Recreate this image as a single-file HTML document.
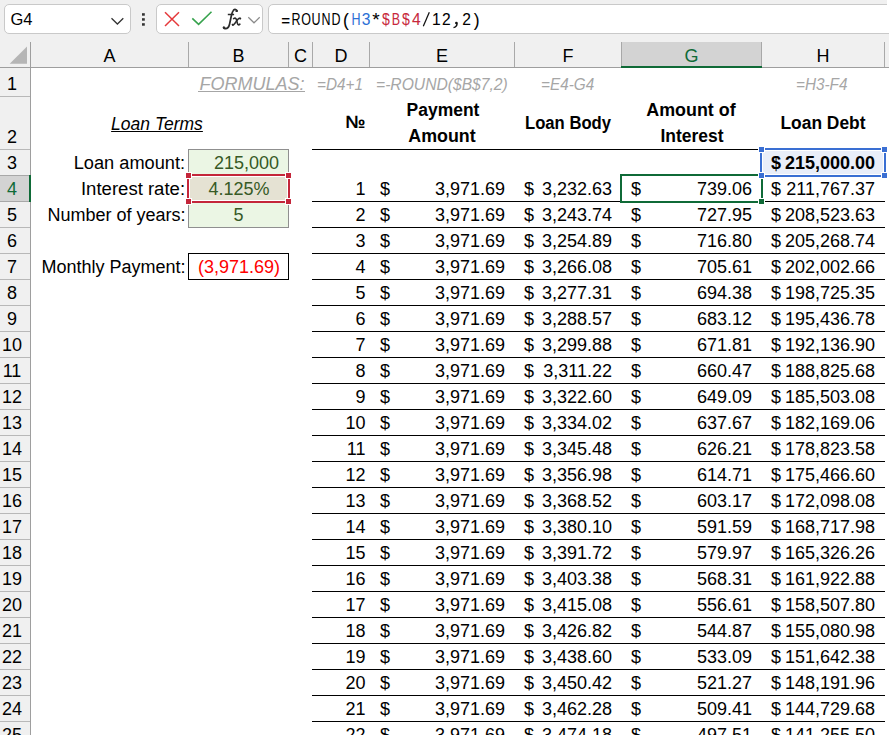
<!DOCTYPE html>
<html><head><meta charset="utf-8"><style>
html,body{margin:0;padding:0;}
body{width:889px;height:735px;overflow:hidden;position:relative;background:#fff;font-family:"Liberation Sans",sans-serif;}
.t{position:absolute;white-space:nowrap;line-height:normal;}
.r{position:absolute;box-sizing:border-box;}
div.r{box-sizing:content-box;}
</style></head><body>
<div class="r" style="left:0px;top:0px;width:889px;height:42px;background:#f0f0f0;"></div>
<div class="r" style="left:4px;top:4px;width:125px;height:28px;border:1px solid #c9c9c9;border-radius:5px;background:#fff"></div>
<div class="r" style="left:156px;top:4px;width:105px;height:28px;border:1px solid #c9c9c9;border-radius:5px;background:#fff"></div>
<div class="r" style="left:268px;top:4px;width:630px;height:28px;border:1px solid #c9c9c9;border-radius:5px;background:#fff"></div>
<div class="r" style="left:887px;top:0px;width:2px;height:33px;background:#ffffff;"></div>
<div class="t" style="left:10.50px;top:10.07px;font-size:16.5px;color:#000;font-weight:normal;font-style:normal;font-family:'Liberation Sans', sans-serif;">G4</div>
<svg class="r" style="left:0;top:0" width="889" height="42" viewBox="0 0 889 42">
<polyline points="111.5,18.2 117.4,24 123.3,18.2" fill="none" stroke="#333" stroke-width="1.3"/>
<rect x="142" y="13.2" width="2.8" height="2.5" fill="#333"/>
<rect x="142" y="18.2" width="2.8" height="2.5" fill="#333"/>
<rect x="142" y="23.2" width="2.8" height="2.5" fill="#333"/>
<line x1="165" y1="12.2" x2="179" y2="26" stroke="#e5393b" stroke-width="1.5"/>
<line x1="179" y1="12.2" x2="165" y2="26" stroke="#e5393b" stroke-width="1.5"/>
<polyline points="192.3,18.4 198.6,24.3 211.5,11.8" fill="none" stroke="#37a24d" stroke-width="1.6"/>
<polyline points="248.3,17.3 254,22.8 259.7,17.3" fill="none" stroke="#8a8a8a" stroke-width="1.2"/>
</svg>
<svg class="r" style="left:0;top:0" width="260" height="42" viewBox="0 0 260 42">
<path d="M237,11 C236.6,9.4 234.8,8.9 233.5,10.2 C232.4,11.4 231.8,13.5 231.3,16 L229.6,24 C229,26.8 227.4,28.9 225,28.7 C224,28.6 223.4,28 223.6,27.3" fill="none" stroke="#2b2b2b" stroke-width="1.7" stroke-linecap="round"/>
<circle cx="236.6" cy="10.9" r="1.2" fill="#2b2b2b"/>
<circle cx="224.1" cy="27.6" r="1.2" fill="#2b2b2b"/>
<path d="M227.8,14.5 L234.1,14.5" stroke="#2b2b2b" stroke-width="1.5"/>
<path d="M233.6,18.6 C235.2,17.6 236,18.2 236.4,19.6 L237.5,23.6 C237.9,25 238.7,25.3 239.9,24.2" fill="none" stroke="#2b2b2b" stroke-width="1.6" stroke-linecap="round"/>
<path d="M240.5,18.5 C239.6,17.8 238.9,18.1 237.9,19.2 L234.6,23.7 C233.8,24.9 233,25.2 232.4,24.6" fill="none" stroke="#2b2b2b" stroke-width="1.5" stroke-linecap="round"/>
<circle cx="240.1" cy="18.4" r="1.0" fill="#2b2b2b"/>
<circle cx="232.9" cy="24.8" r="1.0" fill="#2b2b2b"/>
</svg>
<div class="t" style="left:-14.38px;width:600px;text-align:center;top:11.64px;font-size:15.2px;color:#000;font-weight:normal;font-style:normal;font-family:'Liberation Sans', sans-serif;width:40px;left:265.62px;transform:scaleX(1.00);-webkit-text-stroke:0.05px #000;">=</div>
<div class="t" style="left:-4.32px;width:600px;text-align:center;top:11.28px;font-size:15.6px;color:#000;font-weight:normal;font-style:normal;font-family:'Liberation Sans', sans-serif;width:40px;left:275.68px;transform:scaleX(0.80);-webkit-text-stroke:0.05px #000;">R</div>
<div class="t" style="left:5.73px;width:600px;text-align:center;top:11.28px;font-size:15.6px;color:#000;font-weight:normal;font-style:normal;font-family:'Liberation Sans', sans-serif;width:40px;left:285.73px;transform:scaleX(0.80);-webkit-text-stroke:0.05px #000;">O</div>
<div class="t" style="left:15.77px;width:600px;text-align:center;top:11.28px;font-size:15.6px;color:#000;font-weight:normal;font-style:normal;font-family:'Liberation Sans', sans-serif;width:40px;left:295.77px;transform:scaleX(0.80);-webkit-text-stroke:0.05px #000;">U</div>
<div class="t" style="left:25.82px;width:600px;text-align:center;top:11.28px;font-size:15.6px;color:#000;font-weight:normal;font-style:normal;font-family:'Liberation Sans', sans-serif;width:40px;left:305.82px;transform:scaleX(0.80);-webkit-text-stroke:0.05px #000;">N</div>
<div class="t" style="left:35.88px;width:600px;text-align:center;top:11.28px;font-size:15.6px;color:#000;font-weight:normal;font-style:normal;font-family:'Liberation Sans', sans-serif;width:40px;left:315.88px;transform:scaleX(0.80);-webkit-text-stroke:0.05px #000;">D</div>
<div class="t" style="left:45.93px;width:600px;text-align:center;top:10.36px;font-size:17.5px;color:#000;font-weight:normal;font-style:normal;font-family:'Liberation Sans', sans-serif;width:40px;left:325.93px;transform:scaleX(1.00);-webkit-text-stroke:0.05px #000;">(</div>
<div class="t" style="left:55.98px;width:600px;text-align:center;top:11.28px;font-size:15.6px;color:#2b6fd6;font-weight:normal;font-style:normal;font-family:'Liberation Sans', sans-serif;width:40px;left:335.98px;transform:scaleX(0.80);-webkit-text-stroke:0.05px #2b6fd6;">H</div>
<div class="t" style="left:66.02px;width:600px;text-align:center;top:11.28px;font-size:15.6px;color:#2b6fd6;font-weight:normal;font-style:normal;font-family:'Liberation Sans', sans-serif;width:40px;left:346.02px;transform:scaleX(1.00);-webkit-text-stroke:0.05px #2b6fd6;">3</div>
<div class="t" style="left:76.07px;width:600px;text-align:center;top:9.20px;font-size:19px;color:#000;font-weight:normal;font-style:normal;font-family:'Liberation Sans', sans-serif;width:40px;left:356.07px;transform:scaleX(1.00);-webkit-text-stroke:0.05px #000;">*</div>
<div class="t" style="left:86.12px;width:600px;text-align:center;top:10.47px;font-size:16.5px;color:#c8283c;font-weight:normal;font-style:normal;font-family:'Liberation Sans', sans-serif;width:40px;left:366.12px;transform:scaleX(0.85);-webkit-text-stroke:0.05px #c8283c;">$</div>
<div class="t" style="left:96.18px;width:600px;text-align:center;top:11.28px;font-size:15.6px;color:#c8283c;font-weight:normal;font-style:normal;font-family:'Liberation Sans', sans-serif;width:40px;left:376.18px;transform:scaleX(0.80);-webkit-text-stroke:0.05px #c8283c;">B</div>
<div class="t" style="left:106.23px;width:600px;text-align:center;top:10.47px;font-size:16.5px;color:#c8283c;font-weight:normal;font-style:normal;font-family:'Liberation Sans', sans-serif;width:40px;left:386.23px;transform:scaleX(0.85);-webkit-text-stroke:0.05px #c8283c;">$</div>
<div class="t" style="left:116.27px;width:600px;text-align:center;top:11.28px;font-size:15.6px;color:#c8283c;font-weight:normal;font-style:normal;font-family:'Liberation Sans', sans-serif;width:40px;left:396.27px;transform:scaleX(1.00);-webkit-text-stroke:0.05px #c8283c;">4</div>
<div class="t" style="left:136.38px;width:600px;text-align:center;top:11.28px;font-size:15.6px;color:#000;font-weight:normal;font-style:normal;font-family:'Liberation Sans', sans-serif;width:40px;left:416.38px;transform:scaleX(1.00);-webkit-text-stroke:0.05px #000;">1</div>
<div class="t" style="left:146.43px;width:600px;text-align:center;top:11.28px;font-size:15.6px;color:#000;font-weight:normal;font-style:normal;font-family:'Liberation Sans', sans-serif;width:40px;left:426.43px;transform:scaleX(1.00);-webkit-text-stroke:0.05px #000;">2</div>
<div class="t" style="left:166.52px;width:600px;text-align:center;top:11.28px;font-size:15.6px;color:#000;font-weight:normal;font-style:normal;font-family:'Liberation Sans', sans-serif;width:40px;left:446.52px;transform:scaleX(1.00);-webkit-text-stroke:0.05px #000;">2</div>
<div class="t" style="left:176.58px;width:600px;text-align:center;top:10.36px;font-size:17.5px;color:#000;font-weight:normal;font-style:normal;font-family:'Liberation Sans', sans-serif;width:40px;left:456.58px;transform:scaleX(1.00);-webkit-text-stroke:0.05px #000;">)</div>
<svg class="r" style="left:0;top:0" width="889" height="42" viewBox="0 0 889 42"><line x1="423.3" y1="26.2" x2="429.3" y2="12.3" stroke="#111" stroke-width="1.25"/><circle cx="456.3" cy="23.1" r="1.25" fill="#111"/><path d="M456.9,22.6 C457.3,25 456.4,26.9 453.5,27.7" fill="none" stroke="#111" stroke-width="1.4"/></svg>
<div class="r" style="left:0px;top:42px;width:889px;height:25px;background:#f0f0f0;"></div>
<div class="r" style="left:0px;top:67px;width:889px;height:1px;background:#9e9e9e;"></div>
<div class="r" style="left:0px;top:68px;width:30px;height:667px;background:#f0f0f0;"></div>
<div class="r" style="left:30px;top:42px;width:1px;height:693px;background:#9e9e9e;"></div>
<svg class="r" style="left:0;top:42px" width="30" height="25" viewBox="0 42 30 25"><polygon points="27,46.5 27,63.7 9.7,63.7" fill="#b5b5b5"/></svg>
<div class="r" style="left:188px;top:42px;width:1px;height:25px;background:#a9a9a9;"></div>
<div class="r" style="left:288px;top:42px;width:1px;height:25px;background:#a9a9a9;"></div>
<div class="r" style="left:312px;top:42px;width:1px;height:25px;background:#a9a9a9;"></div>
<div class="r" style="left:369px;top:42px;width:1px;height:25px;background:#a9a9a9;"></div>
<div class="r" style="left:514px;top:42px;width:1px;height:25px;background:#a9a9a9;"></div>
<div class="r" style="left:621px;top:42px;width:1px;height:25px;background:#a9a9a9;"></div>
<div class="r" style="left:761px;top:42px;width:1px;height:25px;background:#a9a9a9;"></div>
<div class="r" style="left:884px;top:42px;width:1px;height:25px;background:#a9a9a9;"></div>
<div class="r" style="left:622px;top:42px;width:139px;height:24px;background:#d3d3d3;"></div>
<div class="r" style="left:621px;top:42px;width:1px;height:25px;background:#a8a8a8;"></div>
<div class="r" style="left:761px;top:42px;width:1px;height:25px;background:#a8a8a8;"></div>
<div class="r" style="left:621px;top:66px;width:141px;height:2px;background:#0f6a37;"></div>
<div class="t" style="left:-190.50px;width:600px;text-align:center;top:45.71px;font-size:18px;color:#000;font-weight:normal;font-style:normal;font-family:'Liberation Sans', sans-serif;">A</div>
<div class="t" style="left:-61.50px;width:600px;text-align:center;top:45.71px;font-size:18px;color:#000;font-weight:normal;font-style:normal;font-family:'Liberation Sans', sans-serif;">B</div>
<div class="t" style="left:0.50px;width:600px;text-align:center;top:45.71px;font-size:18px;color:#000;font-weight:normal;font-style:normal;font-family:'Liberation Sans', sans-serif;">C</div>
<div class="t" style="left:41.00px;width:600px;text-align:center;top:45.71px;font-size:18px;color:#000;font-weight:normal;font-style:normal;font-family:'Liberation Sans', sans-serif;">D</div>
<div class="t" style="left:142.00px;width:600px;text-align:center;top:45.71px;font-size:18px;color:#000;font-weight:normal;font-style:normal;font-family:'Liberation Sans', sans-serif;">E</div>
<div class="t" style="left:268.00px;width:600px;text-align:center;top:45.71px;font-size:18px;color:#000;font-weight:normal;font-style:normal;font-family:'Liberation Sans', sans-serif;">F</div>
<div class="t" style="left:391.50px;width:600px;text-align:center;top:45.71px;font-size:18px;color:#0f6a37;font-weight:normal;font-style:normal;font-family:'Liberation Sans', sans-serif;">G</div>
<div class="t" style="left:523.00px;width:600px;text-align:center;top:45.71px;font-size:18px;color:#000;font-weight:normal;font-style:normal;font-family:'Liberation Sans', sans-serif;">H</div>
<div class="r" style="left:0px;top:96px;width:30px;height:1px;background:#b8b8b8;"></div>
<div class="r" style="left:0px;top:149px;width:30px;height:1px;background:#b8b8b8;"></div>
<div class="r" style="left:0px;top:175px;width:30px;height:1px;background:#b8b8b8;"></div>
<div class="r" style="left:0px;top:201px;width:30px;height:1px;background:#b8b8b8;"></div>
<div class="r" style="left:0px;top:227px;width:30px;height:1px;background:#b8b8b8;"></div>
<div class="r" style="left:0px;top:253px;width:30px;height:1px;background:#b8b8b8;"></div>
<div class="r" style="left:0px;top:279px;width:30px;height:1px;background:#b8b8b8;"></div>
<div class="r" style="left:0px;top:305px;width:30px;height:1px;background:#b8b8b8;"></div>
<div class="r" style="left:0px;top:331px;width:30px;height:1px;background:#b8b8b8;"></div>
<div class="r" style="left:0px;top:357px;width:30px;height:1px;background:#b8b8b8;"></div>
<div class="r" style="left:0px;top:383px;width:30px;height:1px;background:#b8b8b8;"></div>
<div class="r" style="left:0px;top:409px;width:30px;height:1px;background:#b8b8b8;"></div>
<div class="r" style="left:0px;top:435px;width:30px;height:1px;background:#b8b8b8;"></div>
<div class="r" style="left:0px;top:461px;width:30px;height:1px;background:#b8b8b8;"></div>
<div class="r" style="left:0px;top:487px;width:30px;height:1px;background:#b8b8b8;"></div>
<div class="r" style="left:0px;top:513px;width:30px;height:1px;background:#b8b8b8;"></div>
<div class="r" style="left:0px;top:539px;width:30px;height:1px;background:#b8b8b8;"></div>
<div class="r" style="left:0px;top:565px;width:30px;height:1px;background:#b8b8b8;"></div>
<div class="r" style="left:0px;top:591px;width:30px;height:1px;background:#b8b8b8;"></div>
<div class="r" style="left:0px;top:617px;width:30px;height:1px;background:#b8b8b8;"></div>
<div class="r" style="left:0px;top:643px;width:30px;height:1px;background:#b8b8b8;"></div>
<div class="r" style="left:0px;top:669px;width:30px;height:1px;background:#b8b8b8;"></div>
<div class="r" style="left:0px;top:695px;width:30px;height:1px;background:#b8b8b8;"></div>
<div class="r" style="left:0px;top:721px;width:30px;height:1px;background:#b8b8b8;"></div>
<div class="r" style="left:0px;top:176px;width:29px;height:25px;background:#d3d3d3;"></div>
<div class="r" style="left:0px;top:175px;width:30px;height:1px;background:#a8a8a8;"></div>
<div class="r" style="left:0px;top:201px;width:30px;height:1px;background:#a8a8a8;"></div>
<div class="r" style="left:29px;top:175px;width:2px;height:27px;background:#0f6a37;"></div>
<div class="t" style="left:-288.00px;width:600px;text-align:center;top:73.71px;font-size:18px;color:#000;font-weight:normal;font-style:normal;font-family:'Liberation Sans', sans-serif;">1</div>
<div class="t" style="left:-288.00px;width:600px;text-align:center;top:126.71px;font-size:18px;color:#000;font-weight:normal;font-style:normal;font-family:'Liberation Sans', sans-serif;">2</div>
<div class="t" style="left:-288.00px;width:600px;text-align:center;top:152.71px;font-size:18px;color:#000;font-weight:normal;font-style:normal;font-family:'Liberation Sans', sans-serif;">3</div>
<div class="t" style="left:-288.00px;width:600px;text-align:center;top:178.71px;font-size:18px;color:#0f6a37;font-weight:normal;font-style:normal;font-family:'Liberation Sans', sans-serif;">4</div>
<div class="t" style="left:-288.00px;width:600px;text-align:center;top:204.71px;font-size:18px;color:#000;font-weight:normal;font-style:normal;font-family:'Liberation Sans', sans-serif;">5</div>
<div class="t" style="left:-288.00px;width:600px;text-align:center;top:230.71px;font-size:18px;color:#000;font-weight:normal;font-style:normal;font-family:'Liberation Sans', sans-serif;">6</div>
<div class="t" style="left:-288.00px;width:600px;text-align:center;top:256.71px;font-size:18px;color:#000;font-weight:normal;font-style:normal;font-family:'Liberation Sans', sans-serif;">7</div>
<div class="t" style="left:-288.00px;width:600px;text-align:center;top:282.71px;font-size:18px;color:#000;font-weight:normal;font-style:normal;font-family:'Liberation Sans', sans-serif;">8</div>
<div class="t" style="left:-288.00px;width:600px;text-align:center;top:308.71px;font-size:18px;color:#000;font-weight:normal;font-style:normal;font-family:'Liberation Sans', sans-serif;">9</div>
<div class="t" style="left:-288.00px;width:600px;text-align:center;top:334.71px;font-size:18px;color:#000;font-weight:normal;font-style:normal;font-family:'Liberation Sans', sans-serif;">10</div>
<div class="t" style="left:-288.00px;width:600px;text-align:center;top:360.71px;font-size:18px;color:#000;font-weight:normal;font-style:normal;font-family:'Liberation Sans', sans-serif;">11</div>
<div class="t" style="left:-288.00px;width:600px;text-align:center;top:386.71px;font-size:18px;color:#000;font-weight:normal;font-style:normal;font-family:'Liberation Sans', sans-serif;">12</div>
<div class="t" style="left:-288.00px;width:600px;text-align:center;top:412.71px;font-size:18px;color:#000;font-weight:normal;font-style:normal;font-family:'Liberation Sans', sans-serif;">13</div>
<div class="t" style="left:-288.00px;width:600px;text-align:center;top:438.71px;font-size:18px;color:#000;font-weight:normal;font-style:normal;font-family:'Liberation Sans', sans-serif;">14</div>
<div class="t" style="left:-288.00px;width:600px;text-align:center;top:464.71px;font-size:18px;color:#000;font-weight:normal;font-style:normal;font-family:'Liberation Sans', sans-serif;">15</div>
<div class="t" style="left:-288.00px;width:600px;text-align:center;top:490.71px;font-size:18px;color:#000;font-weight:normal;font-style:normal;font-family:'Liberation Sans', sans-serif;">16</div>
<div class="t" style="left:-288.00px;width:600px;text-align:center;top:516.71px;font-size:18px;color:#000;font-weight:normal;font-style:normal;font-family:'Liberation Sans', sans-serif;">17</div>
<div class="t" style="left:-288.00px;width:600px;text-align:center;top:542.71px;font-size:18px;color:#000;font-weight:normal;font-style:normal;font-family:'Liberation Sans', sans-serif;">18</div>
<div class="t" style="left:-288.00px;width:600px;text-align:center;top:568.71px;font-size:18px;color:#000;font-weight:normal;font-style:normal;font-family:'Liberation Sans', sans-serif;">19</div>
<div class="t" style="left:-288.00px;width:600px;text-align:center;top:594.71px;font-size:18px;color:#000;font-weight:normal;font-style:normal;font-family:'Liberation Sans', sans-serif;">20</div>
<div class="t" style="left:-288.00px;width:600px;text-align:center;top:620.71px;font-size:18px;color:#000;font-weight:normal;font-style:normal;font-family:'Liberation Sans', sans-serif;">21</div>
<div class="t" style="left:-288.00px;width:600px;text-align:center;top:646.71px;font-size:18px;color:#000;font-weight:normal;font-style:normal;font-family:'Liberation Sans', sans-serif;">22</div>
<div class="t" style="left:-288.00px;width:600px;text-align:center;top:672.71px;font-size:18px;color:#000;font-weight:normal;font-style:normal;font-family:'Liberation Sans', sans-serif;">23</div>
<div class="t" style="left:-288.00px;width:600px;text-align:center;top:698.71px;font-size:18px;color:#000;font-weight:normal;font-style:normal;font-family:'Liberation Sans', sans-serif;">24</div>
<div class="t" style="left:-288.00px;width:600px;text-align:center;top:724.71px;font-size:18px;color:#000;font-weight:normal;font-style:normal;font-family:'Liberation Sans', sans-serif;">25</div>
<div class="t" style="right:584.50px;top:73.71px;font-size:18px;color:#a6a6a6;font-weight:normal;font-style:italic;font-family:'Liberation Sans', sans-serif;">FORMULAS:</div>
<div class="r" style="left:198px;top:91px;width:107px;height:1px;background:#a6a6a6;"></div>
<div class="t" style="left:317.00px;top:73.75px;font-size:17.4px;color:#a6a6a6;font-weight:normal;font-style:italic;font-family:'Liberation Sans', sans-serif;transform:scaleX(0.88);transform-origin:0 0;">=D4+1</div>
<div class="t" style="left:376.00px;top:73.75px;font-size:17.4px;color:#a6a6a6;font-weight:normal;font-style:italic;font-family:'Liberation Sans', sans-serif;transform:scaleX(0.90);transform-origin:0 0;">=-ROUND($B$7,2)</div>
<div class="t" style="left:540.50px;top:73.75px;font-size:17.4px;color:#a6a6a6;font-weight:normal;font-style:italic;font-family:'Liberation Sans', sans-serif;transform:scaleX(0.88);transform-origin:0 0;">=E4-G4</div>
<div class="t" style="left:796.00px;top:73.75px;font-size:17.4px;color:#a6a6a6;font-weight:normal;font-style:italic;font-family:'Liberation Sans', sans-serif;transform:scaleX(0.88);transform-origin:0 0;">=H3-F4</div>
<div class="t" style="left:-143.00px;width:600px;text-align:center;top:114.16px;font-size:17.5px;color:#000;font-weight:normal;font-style:italic;font-family:'Liberation Sans', sans-serif;"><u>Loan Terms</u></div>
<div class="t" style="left:55.50px;width:600px;text-align:center;top:112.11px;font-size:18px;color:#000;font-weight:bold;font-style:normal;font-family:'Liberation Sans', sans-serif;transform:scaleX(1.000);transform-origin:50% 0;">№</div>
<div class="t" style="left:142.50px;width:600px;text-align:center;top:99.71px;font-size:18px;color:#000;font-weight:bold;font-style:normal;font-family:'Liberation Sans', sans-serif;transform:scaleX(0.970);transform-origin:50% 0;">Payment</div>
<div class="t" style="left:142.00px;width:600px;text-align:center;top:125.71px;font-size:18px;color:#000;font-weight:bold;font-style:normal;font-family:'Liberation Sans', sans-serif;transform:scaleX(0.990);transform-origin:50% 0;">Amount</div>
<div class="t" style="left:268.00px;width:600px;text-align:center;top:112.71px;font-size:18px;color:#000;font-weight:bold;font-style:normal;font-family:'Liberation Sans', sans-serif;transform:scaleX(0.925);transform-origin:50% 0;">Loan Body</div>
<div class="t" style="left:391.00px;width:600px;text-align:center;top:99.71px;font-size:18px;color:#000;font-weight:bold;font-style:normal;font-family:'Liberation Sans', sans-serif;transform:scaleX(0.993);transform-origin:50% 0;">Amount of</div>
<div class="t" style="left:391.50px;width:600px;text-align:center;top:125.71px;font-size:18px;color:#000;font-weight:bold;font-style:normal;font-family:'Liberation Sans', sans-serif;transform:scaleX(0.970);transform-origin:50% 0;">Interest</div>
<div class="t" style="left:523.00px;width:600px;text-align:center;top:112.71px;font-size:18px;color:#000;font-weight:bold;font-style:normal;font-family:'Liberation Sans', sans-serif;transform:scaleX(0.966);transform-origin:50% 0;">Loan Debt</div>
<div class="t" style="right:703.50px;top:152.71px;font-size:18.0px;color:#000;font-weight:normal;font-style:normal;font-family:'Liberation Sans', sans-serif;transform:scaleX(1.012);transform-origin:100% 0;">Loan amount:</div>
<div class="t" style="right:703.50px;top:178.71px;font-size:18.0px;color:#000;font-weight:normal;font-style:normal;font-family:'Liberation Sans', sans-serif;transform:scaleX(1.03);transform-origin:100% 0;">Interest rate:</div>
<div class="t" style="right:703.50px;top:204.71px;font-size:18.0px;color:#000;font-weight:normal;font-style:normal;font-family:'Liberation Sans', sans-serif;">Number of years:</div>
<div class="t" style="right:703.50px;top:256.71px;font-size:18.0px;color:#000;font-weight:normal;font-style:normal;font-family:'Liberation Sans', sans-serif;">Monthly Payment:</div>
<div class="r" style="left:188px;top:149px;width:101px;height:79px;background:#8f8f8f;"></div>
<div class="r" style="left:189px;top:150px;width:99px;height:77px;background:#ebf6e4;"></div>
<div class="r" style="left:188px;top:253px;width:99px;height:25px;border:1px solid #000"></div>
<div class="r" style="left:312px;top:149px;width:573px;height:1px;background:#000;"></div>
<div class="r" style="left:312px;top:201px;width:573px;height:1px;background:#000;"></div>
<div class="r" style="left:312px;top:227px;width:573px;height:1px;background:#000;"></div>
<div class="r" style="left:312px;top:253px;width:573px;height:1px;background:#000;"></div>
<div class="r" style="left:312px;top:279px;width:573px;height:1px;background:#000;"></div>
<div class="r" style="left:312px;top:305px;width:573px;height:1px;background:#000;"></div>
<div class="r" style="left:312px;top:331px;width:573px;height:1px;background:#000;"></div>
<div class="r" style="left:312px;top:357px;width:573px;height:1px;background:#000;"></div>
<div class="r" style="left:312px;top:383px;width:573px;height:1px;background:#000;"></div>
<div class="r" style="left:312px;top:409px;width:573px;height:1px;background:#000;"></div>
<div class="r" style="left:312px;top:435px;width:573px;height:1px;background:#000;"></div>
<div class="r" style="left:312px;top:461px;width:573px;height:1px;background:#000;"></div>
<div class="r" style="left:312px;top:487px;width:573px;height:1px;background:#000;"></div>
<div class="r" style="left:312px;top:513px;width:573px;height:1px;background:#000;"></div>
<div class="r" style="left:312px;top:539px;width:573px;height:1px;background:#000;"></div>
<div class="r" style="left:312px;top:565px;width:573px;height:1px;background:#000;"></div>
<div class="r" style="left:312px;top:591px;width:573px;height:1px;background:#000;"></div>
<div class="r" style="left:312px;top:617px;width:573px;height:1px;background:#000;"></div>
<div class="r" style="left:312px;top:643px;width:573px;height:1px;background:#000;"></div>
<div class="r" style="left:312px;top:669px;width:573px;height:1px;background:#000;"></div>
<div class="r" style="left:312px;top:695px;width:573px;height:1px;background:#000;"></div>
<div class="r" style="left:312px;top:721px;width:573px;height:1px;background:#000;"></div>
<div class="r" style="left:760px;top:148px;width:126px;height:29px;background:#ffffff;"></div>
<div class="r" style="left:760px;top:148px;width:126px;height:2px;background:#3a6fd3;"></div>
<div class="r" style="left:760px;top:175px;width:126px;height:2px;background:#3a6fd3;"></div>
<div class="r" style="left:760px;top:148px;width:2px;height:29px;background:#3a6fd3;"></div>
<div class="r" style="left:884px;top:148px;width:2px;height:29px;background:#3a6fd3;"></div>
<div class="r" style="left:763px;top:151px;width:120px;height:23px;background:#e9eef9;"></div>
<div class="r" style="left:187px;top:174px;width:103px;height:29px;background:#ffffff;"></div>
<div class="r" style="left:187px;top:174px;width:103px;height:2px;background:#c4263a;"></div>
<div class="r" style="left:187px;top:201px;width:103px;height:2px;background:#c4263a;"></div>
<div class="r" style="left:187px;top:174px;width:2px;height:29px;background:#c4263a;"></div>
<div class="r" style="left:288px;top:174px;width:2px;height:29px;background:#c4263a;"></div>
<div class="r" style="left:190px;top:177px;width:97px;height:23px;background:#e5e2d3;"></div>
<div class="r" style="left:620px;top:174px;width:143px;height:2px;background:#0f6a37;"></div>
<div class="r" style="left:620px;top:201px;width:143px;height:2px;background:#0f6a37;"></div>
<div class="r" style="left:620px;top:174px;width:2px;height:29px;background:#0f6a37;"></div>
<div class="r" style="left:761px;top:174px;width:2px;height:29px;background:#0f6a37;"></div>
<div class="t" style="right:610.00px;top:152.71px;font-size:18px;color:#375a26;font-weight:normal;font-style:normal;font-family:'Liberation Sans', sans-serif;">215,000</div>
<div class="t" style="left:-61.00px;width:600px;text-align:center;top:178.71px;font-size:18px;color:#375a26;font-weight:normal;font-style:normal;font-family:'Liberation Sans', sans-serif;">4.125%</div>
<div class="t" style="left:-61.50px;width:600px;text-align:center;top:204.71px;font-size:18px;color:#375a26;font-weight:normal;font-style:normal;font-family:'Liberation Sans', sans-serif;">5</div>
<div class="t" style="left:-61.00px;width:600px;text-align:center;top:256.71px;font-size:18px;color:#ff0000;font-weight:normal;font-style:normal;font-family:'Liberation Sans', sans-serif;">(3,971.69)</div>
<div class="t" style="left:771.00px;top:152.71px;font-size:18px;color:#000;font-weight:bold;font-style:normal;font-family:'Liberation Sans', sans-serif;">$</div>
<div class="t" style="right:14.00px;top:152.71px;font-size:18px;color:#000;font-weight:bold;font-style:normal;font-family:'Liberation Sans', sans-serif;">215,000.00</div>
<div class="t" style="right:523.50px;top:178.71px;font-size:18px;color:#000;font-weight:normal;font-style:normal;font-family:'Liberation Sans', sans-serif;">1</div>
<div class="t" style="left:380.00px;top:178.71px;font-size:18px;color:#000;font-weight:normal;font-style:normal;font-family:'Liberation Sans', sans-serif;">$</div>
<div class="t" style="right:384.00px;top:178.71px;font-size:18px;color:#000;font-weight:normal;font-style:normal;font-family:'Liberation Sans', sans-serif;">3,971.69</div>
<div class="t" style="left:524.00px;top:178.71px;font-size:18px;color:#000;font-weight:normal;font-style:normal;font-family:'Liberation Sans', sans-serif;">$</div>
<div class="t" style="right:277.00px;top:178.71px;font-size:18px;color:#000;font-weight:normal;font-style:normal;font-family:'Liberation Sans', sans-serif;">3,232.63</div>
<div class="t" style="left:631.00px;top:178.71px;font-size:18px;color:#000;font-weight:normal;font-style:normal;font-family:'Liberation Sans', sans-serif;">$</div>
<div class="t" style="right:137.00px;top:178.71px;font-size:18px;color:#000;font-weight:normal;font-style:normal;font-family:'Liberation Sans', sans-serif;">739.06</div>
<div class="t" style="left:771.00px;top:178.71px;font-size:18px;color:#000;font-weight:normal;font-style:normal;font-family:'Liberation Sans', sans-serif;">$</div>
<div class="t" style="right:14.00px;top:178.71px;font-size:18px;color:#000;font-weight:normal;font-style:normal;font-family:'Liberation Sans', sans-serif;">211,767.37</div>
<div class="t" style="right:523.50px;top:204.71px;font-size:18px;color:#000;font-weight:normal;font-style:normal;font-family:'Liberation Sans', sans-serif;">2</div>
<div class="t" style="left:380.00px;top:204.71px;font-size:18px;color:#000;font-weight:normal;font-style:normal;font-family:'Liberation Sans', sans-serif;">$</div>
<div class="t" style="right:384.00px;top:204.71px;font-size:18px;color:#000;font-weight:normal;font-style:normal;font-family:'Liberation Sans', sans-serif;">3,971.69</div>
<div class="t" style="left:524.00px;top:204.71px;font-size:18px;color:#000;font-weight:normal;font-style:normal;font-family:'Liberation Sans', sans-serif;">$</div>
<div class="t" style="right:277.00px;top:204.71px;font-size:18px;color:#000;font-weight:normal;font-style:normal;font-family:'Liberation Sans', sans-serif;">3,243.74</div>
<div class="t" style="left:631.00px;top:204.71px;font-size:18px;color:#000;font-weight:normal;font-style:normal;font-family:'Liberation Sans', sans-serif;">$</div>
<div class="t" style="right:137.00px;top:204.71px;font-size:18px;color:#000;font-weight:normal;font-style:normal;font-family:'Liberation Sans', sans-serif;">727.95</div>
<div class="t" style="left:771.00px;top:204.71px;font-size:18px;color:#000;font-weight:normal;font-style:normal;font-family:'Liberation Sans', sans-serif;">$</div>
<div class="t" style="right:14.00px;top:204.71px;font-size:18px;color:#000;font-weight:normal;font-style:normal;font-family:'Liberation Sans', sans-serif;">208,523.63</div>
<div class="t" style="right:523.50px;top:230.71px;font-size:18px;color:#000;font-weight:normal;font-style:normal;font-family:'Liberation Sans', sans-serif;">3</div>
<div class="t" style="left:380.00px;top:230.71px;font-size:18px;color:#000;font-weight:normal;font-style:normal;font-family:'Liberation Sans', sans-serif;">$</div>
<div class="t" style="right:384.00px;top:230.71px;font-size:18px;color:#000;font-weight:normal;font-style:normal;font-family:'Liberation Sans', sans-serif;">3,971.69</div>
<div class="t" style="left:524.00px;top:230.71px;font-size:18px;color:#000;font-weight:normal;font-style:normal;font-family:'Liberation Sans', sans-serif;">$</div>
<div class="t" style="right:277.00px;top:230.71px;font-size:18px;color:#000;font-weight:normal;font-style:normal;font-family:'Liberation Sans', sans-serif;">3,254.89</div>
<div class="t" style="left:631.00px;top:230.71px;font-size:18px;color:#000;font-weight:normal;font-style:normal;font-family:'Liberation Sans', sans-serif;">$</div>
<div class="t" style="right:137.00px;top:230.71px;font-size:18px;color:#000;font-weight:normal;font-style:normal;font-family:'Liberation Sans', sans-serif;">716.80</div>
<div class="t" style="left:771.00px;top:230.71px;font-size:18px;color:#000;font-weight:normal;font-style:normal;font-family:'Liberation Sans', sans-serif;">$</div>
<div class="t" style="right:14.00px;top:230.71px;font-size:18px;color:#000;font-weight:normal;font-style:normal;font-family:'Liberation Sans', sans-serif;">205,268.74</div>
<div class="t" style="right:523.50px;top:256.71px;font-size:18px;color:#000;font-weight:normal;font-style:normal;font-family:'Liberation Sans', sans-serif;">4</div>
<div class="t" style="left:380.00px;top:256.71px;font-size:18px;color:#000;font-weight:normal;font-style:normal;font-family:'Liberation Sans', sans-serif;">$</div>
<div class="t" style="right:384.00px;top:256.71px;font-size:18px;color:#000;font-weight:normal;font-style:normal;font-family:'Liberation Sans', sans-serif;">3,971.69</div>
<div class="t" style="left:524.00px;top:256.71px;font-size:18px;color:#000;font-weight:normal;font-style:normal;font-family:'Liberation Sans', sans-serif;">$</div>
<div class="t" style="right:277.00px;top:256.71px;font-size:18px;color:#000;font-weight:normal;font-style:normal;font-family:'Liberation Sans', sans-serif;">3,266.08</div>
<div class="t" style="left:631.00px;top:256.71px;font-size:18px;color:#000;font-weight:normal;font-style:normal;font-family:'Liberation Sans', sans-serif;">$</div>
<div class="t" style="right:137.00px;top:256.71px;font-size:18px;color:#000;font-weight:normal;font-style:normal;font-family:'Liberation Sans', sans-serif;">705.61</div>
<div class="t" style="left:771.00px;top:256.71px;font-size:18px;color:#000;font-weight:normal;font-style:normal;font-family:'Liberation Sans', sans-serif;">$</div>
<div class="t" style="right:14.00px;top:256.71px;font-size:18px;color:#000;font-weight:normal;font-style:normal;font-family:'Liberation Sans', sans-serif;">202,002.66</div>
<div class="t" style="right:523.50px;top:282.71px;font-size:18px;color:#000;font-weight:normal;font-style:normal;font-family:'Liberation Sans', sans-serif;">5</div>
<div class="t" style="left:380.00px;top:282.71px;font-size:18px;color:#000;font-weight:normal;font-style:normal;font-family:'Liberation Sans', sans-serif;">$</div>
<div class="t" style="right:384.00px;top:282.71px;font-size:18px;color:#000;font-weight:normal;font-style:normal;font-family:'Liberation Sans', sans-serif;">3,971.69</div>
<div class="t" style="left:524.00px;top:282.71px;font-size:18px;color:#000;font-weight:normal;font-style:normal;font-family:'Liberation Sans', sans-serif;">$</div>
<div class="t" style="right:277.00px;top:282.71px;font-size:18px;color:#000;font-weight:normal;font-style:normal;font-family:'Liberation Sans', sans-serif;">3,277.31</div>
<div class="t" style="left:631.00px;top:282.71px;font-size:18px;color:#000;font-weight:normal;font-style:normal;font-family:'Liberation Sans', sans-serif;">$</div>
<div class="t" style="right:137.00px;top:282.71px;font-size:18px;color:#000;font-weight:normal;font-style:normal;font-family:'Liberation Sans', sans-serif;">694.38</div>
<div class="t" style="left:771.00px;top:282.71px;font-size:18px;color:#000;font-weight:normal;font-style:normal;font-family:'Liberation Sans', sans-serif;">$</div>
<div class="t" style="right:14.00px;top:282.71px;font-size:18px;color:#000;font-weight:normal;font-style:normal;font-family:'Liberation Sans', sans-serif;">198,725.35</div>
<div class="t" style="right:523.50px;top:308.71px;font-size:18px;color:#000;font-weight:normal;font-style:normal;font-family:'Liberation Sans', sans-serif;">6</div>
<div class="t" style="left:380.00px;top:308.71px;font-size:18px;color:#000;font-weight:normal;font-style:normal;font-family:'Liberation Sans', sans-serif;">$</div>
<div class="t" style="right:384.00px;top:308.71px;font-size:18px;color:#000;font-weight:normal;font-style:normal;font-family:'Liberation Sans', sans-serif;">3,971.69</div>
<div class="t" style="left:524.00px;top:308.71px;font-size:18px;color:#000;font-weight:normal;font-style:normal;font-family:'Liberation Sans', sans-serif;">$</div>
<div class="t" style="right:277.00px;top:308.71px;font-size:18px;color:#000;font-weight:normal;font-style:normal;font-family:'Liberation Sans', sans-serif;">3,288.57</div>
<div class="t" style="left:631.00px;top:308.71px;font-size:18px;color:#000;font-weight:normal;font-style:normal;font-family:'Liberation Sans', sans-serif;">$</div>
<div class="t" style="right:137.00px;top:308.71px;font-size:18px;color:#000;font-weight:normal;font-style:normal;font-family:'Liberation Sans', sans-serif;">683.12</div>
<div class="t" style="left:771.00px;top:308.71px;font-size:18px;color:#000;font-weight:normal;font-style:normal;font-family:'Liberation Sans', sans-serif;">$</div>
<div class="t" style="right:14.00px;top:308.71px;font-size:18px;color:#000;font-weight:normal;font-style:normal;font-family:'Liberation Sans', sans-serif;">195,436.78</div>
<div class="t" style="right:523.50px;top:334.71px;font-size:18px;color:#000;font-weight:normal;font-style:normal;font-family:'Liberation Sans', sans-serif;">7</div>
<div class="t" style="left:380.00px;top:334.71px;font-size:18px;color:#000;font-weight:normal;font-style:normal;font-family:'Liberation Sans', sans-serif;">$</div>
<div class="t" style="right:384.00px;top:334.71px;font-size:18px;color:#000;font-weight:normal;font-style:normal;font-family:'Liberation Sans', sans-serif;">3,971.69</div>
<div class="t" style="left:524.00px;top:334.71px;font-size:18px;color:#000;font-weight:normal;font-style:normal;font-family:'Liberation Sans', sans-serif;">$</div>
<div class="t" style="right:277.00px;top:334.71px;font-size:18px;color:#000;font-weight:normal;font-style:normal;font-family:'Liberation Sans', sans-serif;">3,299.88</div>
<div class="t" style="left:631.00px;top:334.71px;font-size:18px;color:#000;font-weight:normal;font-style:normal;font-family:'Liberation Sans', sans-serif;">$</div>
<div class="t" style="right:137.00px;top:334.71px;font-size:18px;color:#000;font-weight:normal;font-style:normal;font-family:'Liberation Sans', sans-serif;">671.81</div>
<div class="t" style="left:771.00px;top:334.71px;font-size:18px;color:#000;font-weight:normal;font-style:normal;font-family:'Liberation Sans', sans-serif;">$</div>
<div class="t" style="right:14.00px;top:334.71px;font-size:18px;color:#000;font-weight:normal;font-style:normal;font-family:'Liberation Sans', sans-serif;">192,136.90</div>
<div class="t" style="right:523.50px;top:360.71px;font-size:18px;color:#000;font-weight:normal;font-style:normal;font-family:'Liberation Sans', sans-serif;">8</div>
<div class="t" style="left:380.00px;top:360.71px;font-size:18px;color:#000;font-weight:normal;font-style:normal;font-family:'Liberation Sans', sans-serif;">$</div>
<div class="t" style="right:384.00px;top:360.71px;font-size:18px;color:#000;font-weight:normal;font-style:normal;font-family:'Liberation Sans', sans-serif;">3,971.69</div>
<div class="t" style="left:524.00px;top:360.71px;font-size:18px;color:#000;font-weight:normal;font-style:normal;font-family:'Liberation Sans', sans-serif;">$</div>
<div class="t" style="right:277.00px;top:360.71px;font-size:18px;color:#000;font-weight:normal;font-style:normal;font-family:'Liberation Sans', sans-serif;">3,311.22</div>
<div class="t" style="left:631.00px;top:360.71px;font-size:18px;color:#000;font-weight:normal;font-style:normal;font-family:'Liberation Sans', sans-serif;">$</div>
<div class="t" style="right:137.00px;top:360.71px;font-size:18px;color:#000;font-weight:normal;font-style:normal;font-family:'Liberation Sans', sans-serif;">660.47</div>
<div class="t" style="left:771.00px;top:360.71px;font-size:18px;color:#000;font-weight:normal;font-style:normal;font-family:'Liberation Sans', sans-serif;">$</div>
<div class="t" style="right:14.00px;top:360.71px;font-size:18px;color:#000;font-weight:normal;font-style:normal;font-family:'Liberation Sans', sans-serif;">188,825.68</div>
<div class="t" style="right:523.50px;top:386.71px;font-size:18px;color:#000;font-weight:normal;font-style:normal;font-family:'Liberation Sans', sans-serif;">9</div>
<div class="t" style="left:380.00px;top:386.71px;font-size:18px;color:#000;font-weight:normal;font-style:normal;font-family:'Liberation Sans', sans-serif;">$</div>
<div class="t" style="right:384.00px;top:386.71px;font-size:18px;color:#000;font-weight:normal;font-style:normal;font-family:'Liberation Sans', sans-serif;">3,971.69</div>
<div class="t" style="left:524.00px;top:386.71px;font-size:18px;color:#000;font-weight:normal;font-style:normal;font-family:'Liberation Sans', sans-serif;">$</div>
<div class="t" style="right:277.00px;top:386.71px;font-size:18px;color:#000;font-weight:normal;font-style:normal;font-family:'Liberation Sans', sans-serif;">3,322.60</div>
<div class="t" style="left:631.00px;top:386.71px;font-size:18px;color:#000;font-weight:normal;font-style:normal;font-family:'Liberation Sans', sans-serif;">$</div>
<div class="t" style="right:137.00px;top:386.71px;font-size:18px;color:#000;font-weight:normal;font-style:normal;font-family:'Liberation Sans', sans-serif;">649.09</div>
<div class="t" style="left:771.00px;top:386.71px;font-size:18px;color:#000;font-weight:normal;font-style:normal;font-family:'Liberation Sans', sans-serif;">$</div>
<div class="t" style="right:14.00px;top:386.71px;font-size:18px;color:#000;font-weight:normal;font-style:normal;font-family:'Liberation Sans', sans-serif;">185,503.08</div>
<div class="t" style="right:523.50px;top:412.71px;font-size:18px;color:#000;font-weight:normal;font-style:normal;font-family:'Liberation Sans', sans-serif;">10</div>
<div class="t" style="left:380.00px;top:412.71px;font-size:18px;color:#000;font-weight:normal;font-style:normal;font-family:'Liberation Sans', sans-serif;">$</div>
<div class="t" style="right:384.00px;top:412.71px;font-size:18px;color:#000;font-weight:normal;font-style:normal;font-family:'Liberation Sans', sans-serif;">3,971.69</div>
<div class="t" style="left:524.00px;top:412.71px;font-size:18px;color:#000;font-weight:normal;font-style:normal;font-family:'Liberation Sans', sans-serif;">$</div>
<div class="t" style="right:277.00px;top:412.71px;font-size:18px;color:#000;font-weight:normal;font-style:normal;font-family:'Liberation Sans', sans-serif;">3,334.02</div>
<div class="t" style="left:631.00px;top:412.71px;font-size:18px;color:#000;font-weight:normal;font-style:normal;font-family:'Liberation Sans', sans-serif;">$</div>
<div class="t" style="right:137.00px;top:412.71px;font-size:18px;color:#000;font-weight:normal;font-style:normal;font-family:'Liberation Sans', sans-serif;">637.67</div>
<div class="t" style="left:771.00px;top:412.71px;font-size:18px;color:#000;font-weight:normal;font-style:normal;font-family:'Liberation Sans', sans-serif;">$</div>
<div class="t" style="right:14.00px;top:412.71px;font-size:18px;color:#000;font-weight:normal;font-style:normal;font-family:'Liberation Sans', sans-serif;">182,169.06</div>
<div class="t" style="right:523.50px;top:438.71px;font-size:18px;color:#000;font-weight:normal;font-style:normal;font-family:'Liberation Sans', sans-serif;">11</div>
<div class="t" style="left:380.00px;top:438.71px;font-size:18px;color:#000;font-weight:normal;font-style:normal;font-family:'Liberation Sans', sans-serif;">$</div>
<div class="t" style="right:384.00px;top:438.71px;font-size:18px;color:#000;font-weight:normal;font-style:normal;font-family:'Liberation Sans', sans-serif;">3,971.69</div>
<div class="t" style="left:524.00px;top:438.71px;font-size:18px;color:#000;font-weight:normal;font-style:normal;font-family:'Liberation Sans', sans-serif;">$</div>
<div class="t" style="right:277.00px;top:438.71px;font-size:18px;color:#000;font-weight:normal;font-style:normal;font-family:'Liberation Sans', sans-serif;">3,345.48</div>
<div class="t" style="left:631.00px;top:438.71px;font-size:18px;color:#000;font-weight:normal;font-style:normal;font-family:'Liberation Sans', sans-serif;">$</div>
<div class="t" style="right:137.00px;top:438.71px;font-size:18px;color:#000;font-weight:normal;font-style:normal;font-family:'Liberation Sans', sans-serif;">626.21</div>
<div class="t" style="left:771.00px;top:438.71px;font-size:18px;color:#000;font-weight:normal;font-style:normal;font-family:'Liberation Sans', sans-serif;">$</div>
<div class="t" style="right:14.00px;top:438.71px;font-size:18px;color:#000;font-weight:normal;font-style:normal;font-family:'Liberation Sans', sans-serif;">178,823.58</div>
<div class="t" style="right:523.50px;top:464.71px;font-size:18px;color:#000;font-weight:normal;font-style:normal;font-family:'Liberation Sans', sans-serif;">12</div>
<div class="t" style="left:380.00px;top:464.71px;font-size:18px;color:#000;font-weight:normal;font-style:normal;font-family:'Liberation Sans', sans-serif;">$</div>
<div class="t" style="right:384.00px;top:464.71px;font-size:18px;color:#000;font-weight:normal;font-style:normal;font-family:'Liberation Sans', sans-serif;">3,971.69</div>
<div class="t" style="left:524.00px;top:464.71px;font-size:18px;color:#000;font-weight:normal;font-style:normal;font-family:'Liberation Sans', sans-serif;">$</div>
<div class="t" style="right:277.00px;top:464.71px;font-size:18px;color:#000;font-weight:normal;font-style:normal;font-family:'Liberation Sans', sans-serif;">3,356.98</div>
<div class="t" style="left:631.00px;top:464.71px;font-size:18px;color:#000;font-weight:normal;font-style:normal;font-family:'Liberation Sans', sans-serif;">$</div>
<div class="t" style="right:137.00px;top:464.71px;font-size:18px;color:#000;font-weight:normal;font-style:normal;font-family:'Liberation Sans', sans-serif;">614.71</div>
<div class="t" style="left:771.00px;top:464.71px;font-size:18px;color:#000;font-weight:normal;font-style:normal;font-family:'Liberation Sans', sans-serif;">$</div>
<div class="t" style="right:14.00px;top:464.71px;font-size:18px;color:#000;font-weight:normal;font-style:normal;font-family:'Liberation Sans', sans-serif;">175,466.60</div>
<div class="t" style="right:523.50px;top:490.71px;font-size:18px;color:#000;font-weight:normal;font-style:normal;font-family:'Liberation Sans', sans-serif;">13</div>
<div class="t" style="left:380.00px;top:490.71px;font-size:18px;color:#000;font-weight:normal;font-style:normal;font-family:'Liberation Sans', sans-serif;">$</div>
<div class="t" style="right:384.00px;top:490.71px;font-size:18px;color:#000;font-weight:normal;font-style:normal;font-family:'Liberation Sans', sans-serif;">3,971.69</div>
<div class="t" style="left:524.00px;top:490.71px;font-size:18px;color:#000;font-weight:normal;font-style:normal;font-family:'Liberation Sans', sans-serif;">$</div>
<div class="t" style="right:277.00px;top:490.71px;font-size:18px;color:#000;font-weight:normal;font-style:normal;font-family:'Liberation Sans', sans-serif;">3,368.52</div>
<div class="t" style="left:631.00px;top:490.71px;font-size:18px;color:#000;font-weight:normal;font-style:normal;font-family:'Liberation Sans', sans-serif;">$</div>
<div class="t" style="right:137.00px;top:490.71px;font-size:18px;color:#000;font-weight:normal;font-style:normal;font-family:'Liberation Sans', sans-serif;">603.17</div>
<div class="t" style="left:771.00px;top:490.71px;font-size:18px;color:#000;font-weight:normal;font-style:normal;font-family:'Liberation Sans', sans-serif;">$</div>
<div class="t" style="right:14.00px;top:490.71px;font-size:18px;color:#000;font-weight:normal;font-style:normal;font-family:'Liberation Sans', sans-serif;">172,098.08</div>
<div class="t" style="right:523.50px;top:516.71px;font-size:18px;color:#000;font-weight:normal;font-style:normal;font-family:'Liberation Sans', sans-serif;">14</div>
<div class="t" style="left:380.00px;top:516.71px;font-size:18px;color:#000;font-weight:normal;font-style:normal;font-family:'Liberation Sans', sans-serif;">$</div>
<div class="t" style="right:384.00px;top:516.71px;font-size:18px;color:#000;font-weight:normal;font-style:normal;font-family:'Liberation Sans', sans-serif;">3,971.69</div>
<div class="t" style="left:524.00px;top:516.71px;font-size:18px;color:#000;font-weight:normal;font-style:normal;font-family:'Liberation Sans', sans-serif;">$</div>
<div class="t" style="right:277.00px;top:516.71px;font-size:18px;color:#000;font-weight:normal;font-style:normal;font-family:'Liberation Sans', sans-serif;">3,380.10</div>
<div class="t" style="left:631.00px;top:516.71px;font-size:18px;color:#000;font-weight:normal;font-style:normal;font-family:'Liberation Sans', sans-serif;">$</div>
<div class="t" style="right:137.00px;top:516.71px;font-size:18px;color:#000;font-weight:normal;font-style:normal;font-family:'Liberation Sans', sans-serif;">591.59</div>
<div class="t" style="left:771.00px;top:516.71px;font-size:18px;color:#000;font-weight:normal;font-style:normal;font-family:'Liberation Sans', sans-serif;">$</div>
<div class="t" style="right:14.00px;top:516.71px;font-size:18px;color:#000;font-weight:normal;font-style:normal;font-family:'Liberation Sans', sans-serif;">168,717.98</div>
<div class="t" style="right:523.50px;top:542.71px;font-size:18px;color:#000;font-weight:normal;font-style:normal;font-family:'Liberation Sans', sans-serif;">15</div>
<div class="t" style="left:380.00px;top:542.71px;font-size:18px;color:#000;font-weight:normal;font-style:normal;font-family:'Liberation Sans', sans-serif;">$</div>
<div class="t" style="right:384.00px;top:542.71px;font-size:18px;color:#000;font-weight:normal;font-style:normal;font-family:'Liberation Sans', sans-serif;">3,971.69</div>
<div class="t" style="left:524.00px;top:542.71px;font-size:18px;color:#000;font-weight:normal;font-style:normal;font-family:'Liberation Sans', sans-serif;">$</div>
<div class="t" style="right:277.00px;top:542.71px;font-size:18px;color:#000;font-weight:normal;font-style:normal;font-family:'Liberation Sans', sans-serif;">3,391.72</div>
<div class="t" style="left:631.00px;top:542.71px;font-size:18px;color:#000;font-weight:normal;font-style:normal;font-family:'Liberation Sans', sans-serif;">$</div>
<div class="t" style="right:137.00px;top:542.71px;font-size:18px;color:#000;font-weight:normal;font-style:normal;font-family:'Liberation Sans', sans-serif;">579.97</div>
<div class="t" style="left:771.00px;top:542.71px;font-size:18px;color:#000;font-weight:normal;font-style:normal;font-family:'Liberation Sans', sans-serif;">$</div>
<div class="t" style="right:14.00px;top:542.71px;font-size:18px;color:#000;font-weight:normal;font-style:normal;font-family:'Liberation Sans', sans-serif;">165,326.26</div>
<div class="t" style="right:523.50px;top:568.71px;font-size:18px;color:#000;font-weight:normal;font-style:normal;font-family:'Liberation Sans', sans-serif;">16</div>
<div class="t" style="left:380.00px;top:568.71px;font-size:18px;color:#000;font-weight:normal;font-style:normal;font-family:'Liberation Sans', sans-serif;">$</div>
<div class="t" style="right:384.00px;top:568.71px;font-size:18px;color:#000;font-weight:normal;font-style:normal;font-family:'Liberation Sans', sans-serif;">3,971.69</div>
<div class="t" style="left:524.00px;top:568.71px;font-size:18px;color:#000;font-weight:normal;font-style:normal;font-family:'Liberation Sans', sans-serif;">$</div>
<div class="t" style="right:277.00px;top:568.71px;font-size:18px;color:#000;font-weight:normal;font-style:normal;font-family:'Liberation Sans', sans-serif;">3,403.38</div>
<div class="t" style="left:631.00px;top:568.71px;font-size:18px;color:#000;font-weight:normal;font-style:normal;font-family:'Liberation Sans', sans-serif;">$</div>
<div class="t" style="right:137.00px;top:568.71px;font-size:18px;color:#000;font-weight:normal;font-style:normal;font-family:'Liberation Sans', sans-serif;">568.31</div>
<div class="t" style="left:771.00px;top:568.71px;font-size:18px;color:#000;font-weight:normal;font-style:normal;font-family:'Liberation Sans', sans-serif;">$</div>
<div class="t" style="right:14.00px;top:568.71px;font-size:18px;color:#000;font-weight:normal;font-style:normal;font-family:'Liberation Sans', sans-serif;">161,922.88</div>
<div class="t" style="right:523.50px;top:594.71px;font-size:18px;color:#000;font-weight:normal;font-style:normal;font-family:'Liberation Sans', sans-serif;">17</div>
<div class="t" style="left:380.00px;top:594.71px;font-size:18px;color:#000;font-weight:normal;font-style:normal;font-family:'Liberation Sans', sans-serif;">$</div>
<div class="t" style="right:384.00px;top:594.71px;font-size:18px;color:#000;font-weight:normal;font-style:normal;font-family:'Liberation Sans', sans-serif;">3,971.69</div>
<div class="t" style="left:524.00px;top:594.71px;font-size:18px;color:#000;font-weight:normal;font-style:normal;font-family:'Liberation Sans', sans-serif;">$</div>
<div class="t" style="right:277.00px;top:594.71px;font-size:18px;color:#000;font-weight:normal;font-style:normal;font-family:'Liberation Sans', sans-serif;">3,415.08</div>
<div class="t" style="left:631.00px;top:594.71px;font-size:18px;color:#000;font-weight:normal;font-style:normal;font-family:'Liberation Sans', sans-serif;">$</div>
<div class="t" style="right:137.00px;top:594.71px;font-size:18px;color:#000;font-weight:normal;font-style:normal;font-family:'Liberation Sans', sans-serif;">556.61</div>
<div class="t" style="left:771.00px;top:594.71px;font-size:18px;color:#000;font-weight:normal;font-style:normal;font-family:'Liberation Sans', sans-serif;">$</div>
<div class="t" style="right:14.00px;top:594.71px;font-size:18px;color:#000;font-weight:normal;font-style:normal;font-family:'Liberation Sans', sans-serif;">158,507.80</div>
<div class="t" style="right:523.50px;top:620.71px;font-size:18px;color:#000;font-weight:normal;font-style:normal;font-family:'Liberation Sans', sans-serif;">18</div>
<div class="t" style="left:380.00px;top:620.71px;font-size:18px;color:#000;font-weight:normal;font-style:normal;font-family:'Liberation Sans', sans-serif;">$</div>
<div class="t" style="right:384.00px;top:620.71px;font-size:18px;color:#000;font-weight:normal;font-style:normal;font-family:'Liberation Sans', sans-serif;">3,971.69</div>
<div class="t" style="left:524.00px;top:620.71px;font-size:18px;color:#000;font-weight:normal;font-style:normal;font-family:'Liberation Sans', sans-serif;">$</div>
<div class="t" style="right:277.00px;top:620.71px;font-size:18px;color:#000;font-weight:normal;font-style:normal;font-family:'Liberation Sans', sans-serif;">3,426.82</div>
<div class="t" style="left:631.00px;top:620.71px;font-size:18px;color:#000;font-weight:normal;font-style:normal;font-family:'Liberation Sans', sans-serif;">$</div>
<div class="t" style="right:137.00px;top:620.71px;font-size:18px;color:#000;font-weight:normal;font-style:normal;font-family:'Liberation Sans', sans-serif;">544.87</div>
<div class="t" style="left:771.00px;top:620.71px;font-size:18px;color:#000;font-weight:normal;font-style:normal;font-family:'Liberation Sans', sans-serif;">$</div>
<div class="t" style="right:14.00px;top:620.71px;font-size:18px;color:#000;font-weight:normal;font-style:normal;font-family:'Liberation Sans', sans-serif;">155,080.98</div>
<div class="t" style="right:523.50px;top:646.71px;font-size:18px;color:#000;font-weight:normal;font-style:normal;font-family:'Liberation Sans', sans-serif;">19</div>
<div class="t" style="left:380.00px;top:646.71px;font-size:18px;color:#000;font-weight:normal;font-style:normal;font-family:'Liberation Sans', sans-serif;">$</div>
<div class="t" style="right:384.00px;top:646.71px;font-size:18px;color:#000;font-weight:normal;font-style:normal;font-family:'Liberation Sans', sans-serif;">3,971.69</div>
<div class="t" style="left:524.00px;top:646.71px;font-size:18px;color:#000;font-weight:normal;font-style:normal;font-family:'Liberation Sans', sans-serif;">$</div>
<div class="t" style="right:277.00px;top:646.71px;font-size:18px;color:#000;font-weight:normal;font-style:normal;font-family:'Liberation Sans', sans-serif;">3,438.60</div>
<div class="t" style="left:631.00px;top:646.71px;font-size:18px;color:#000;font-weight:normal;font-style:normal;font-family:'Liberation Sans', sans-serif;">$</div>
<div class="t" style="right:137.00px;top:646.71px;font-size:18px;color:#000;font-weight:normal;font-style:normal;font-family:'Liberation Sans', sans-serif;">533.09</div>
<div class="t" style="left:771.00px;top:646.71px;font-size:18px;color:#000;font-weight:normal;font-style:normal;font-family:'Liberation Sans', sans-serif;">$</div>
<div class="t" style="right:14.00px;top:646.71px;font-size:18px;color:#000;font-weight:normal;font-style:normal;font-family:'Liberation Sans', sans-serif;">151,642.38</div>
<div class="t" style="right:523.50px;top:672.71px;font-size:18px;color:#000;font-weight:normal;font-style:normal;font-family:'Liberation Sans', sans-serif;">20</div>
<div class="t" style="left:380.00px;top:672.71px;font-size:18px;color:#000;font-weight:normal;font-style:normal;font-family:'Liberation Sans', sans-serif;">$</div>
<div class="t" style="right:384.00px;top:672.71px;font-size:18px;color:#000;font-weight:normal;font-style:normal;font-family:'Liberation Sans', sans-serif;">3,971.69</div>
<div class="t" style="left:524.00px;top:672.71px;font-size:18px;color:#000;font-weight:normal;font-style:normal;font-family:'Liberation Sans', sans-serif;">$</div>
<div class="t" style="right:277.00px;top:672.71px;font-size:18px;color:#000;font-weight:normal;font-style:normal;font-family:'Liberation Sans', sans-serif;">3,450.42</div>
<div class="t" style="left:631.00px;top:672.71px;font-size:18px;color:#000;font-weight:normal;font-style:normal;font-family:'Liberation Sans', sans-serif;">$</div>
<div class="t" style="right:137.00px;top:672.71px;font-size:18px;color:#000;font-weight:normal;font-style:normal;font-family:'Liberation Sans', sans-serif;">521.27</div>
<div class="t" style="left:771.00px;top:672.71px;font-size:18px;color:#000;font-weight:normal;font-style:normal;font-family:'Liberation Sans', sans-serif;">$</div>
<div class="t" style="right:14.00px;top:672.71px;font-size:18px;color:#000;font-weight:normal;font-style:normal;font-family:'Liberation Sans', sans-serif;">148,191.96</div>
<div class="t" style="right:523.50px;top:698.71px;font-size:18px;color:#000;font-weight:normal;font-style:normal;font-family:'Liberation Sans', sans-serif;">21</div>
<div class="t" style="left:380.00px;top:698.71px;font-size:18px;color:#000;font-weight:normal;font-style:normal;font-family:'Liberation Sans', sans-serif;">$</div>
<div class="t" style="right:384.00px;top:698.71px;font-size:18px;color:#000;font-weight:normal;font-style:normal;font-family:'Liberation Sans', sans-serif;">3,971.69</div>
<div class="t" style="left:524.00px;top:698.71px;font-size:18px;color:#000;font-weight:normal;font-style:normal;font-family:'Liberation Sans', sans-serif;">$</div>
<div class="t" style="right:277.00px;top:698.71px;font-size:18px;color:#000;font-weight:normal;font-style:normal;font-family:'Liberation Sans', sans-serif;">3,462.28</div>
<div class="t" style="left:631.00px;top:698.71px;font-size:18px;color:#000;font-weight:normal;font-style:normal;font-family:'Liberation Sans', sans-serif;">$</div>
<div class="t" style="right:137.00px;top:698.71px;font-size:18px;color:#000;font-weight:normal;font-style:normal;font-family:'Liberation Sans', sans-serif;">509.41</div>
<div class="t" style="left:771.00px;top:698.71px;font-size:18px;color:#000;font-weight:normal;font-style:normal;font-family:'Liberation Sans', sans-serif;">$</div>
<div class="t" style="right:14.00px;top:698.71px;font-size:18px;color:#000;font-weight:normal;font-style:normal;font-family:'Liberation Sans', sans-serif;">144,729.68</div>
<div class="t" style="right:523.50px;top:724.71px;font-size:18px;color:#000;font-weight:normal;font-style:normal;font-family:'Liberation Sans', sans-serif;">22</div>
<div class="t" style="left:380.00px;top:724.71px;font-size:18px;color:#000;font-weight:normal;font-style:normal;font-family:'Liberation Sans', sans-serif;">$</div>
<div class="t" style="right:384.00px;top:724.71px;font-size:18px;color:#000;font-weight:normal;font-style:normal;font-family:'Liberation Sans', sans-serif;">3,971.69</div>
<div class="t" style="left:524.00px;top:724.71px;font-size:18px;color:#000;font-weight:normal;font-style:normal;font-family:'Liberation Sans', sans-serif;">$</div>
<div class="t" style="right:277.00px;top:724.71px;font-size:18px;color:#000;font-weight:normal;font-style:normal;font-family:'Liberation Sans', sans-serif;">3,474.18</div>
<div class="t" style="left:631.00px;top:724.71px;font-size:18px;color:#000;font-weight:normal;font-style:normal;font-family:'Liberation Sans', sans-serif;">$</div>
<div class="t" style="right:137.00px;top:724.71px;font-size:18px;color:#000;font-weight:normal;font-style:normal;font-family:'Liberation Sans', sans-serif;">497.51</div>
<div class="t" style="left:771.00px;top:724.71px;font-size:18px;color:#000;font-weight:normal;font-style:normal;font-family:'Liberation Sans', sans-serif;">$</div>
<div class="t" style="right:14.00px;top:724.71px;font-size:18px;color:#000;font-weight:normal;font-style:normal;font-family:'Liberation Sans', sans-serif;">141,255.50</div>
<div class="r" style="left:185px;top:172px;width:7px;height:7px;background:#ffffff;"></div>
<div class="r" style="left:186px;top:173px;width:5px;height:5px;background:#c4263a;"></div>
<div class="r" style="left:285px;top:172px;width:7px;height:7px;background:#ffffff;"></div>
<div class="r" style="left:286px;top:173px;width:5px;height:5px;background:#c4263a;"></div>
<div class="r" style="left:185px;top:198px;width:7px;height:7px;background:#ffffff;"></div>
<div class="r" style="left:186px;top:199px;width:5px;height:5px;background:#c4263a;"></div>
<div class="r" style="left:285px;top:198px;width:7px;height:7px;background:#ffffff;"></div>
<div class="r" style="left:286px;top:199px;width:5px;height:5px;background:#c4263a;"></div>
<div class="r" style="left:758px;top:198px;width:7px;height:7px;background:#ffffff;"></div>
<div class="r" style="left:759px;top:199px;width:5px;height:5px;background:#0f6a37;"></div>
<div class="r" style="left:758px;top:146px;width:7px;height:7px;background:#ffffff;"></div>
<div class="r" style="left:759px;top:147px;width:5px;height:5px;background:#3a6fd3;"></div>
<div class="r" style="left:881px;top:146px;width:7px;height:7px;background:#ffffff;"></div>
<div class="r" style="left:882px;top:147px;width:5px;height:5px;background:#3a6fd3;"></div>
<div class="r" style="left:758px;top:172px;width:7px;height:7px;background:#ffffff;"></div>
<div class="r" style="left:759px;top:173px;width:5px;height:5px;background:#3a6fd3;"></div>
<div class="r" style="left:881px;top:172px;width:7px;height:7px;background:#ffffff;"></div>
<div class="r" style="left:882px;top:173px;width:5px;height:5px;background:#3a6fd3;"></div>
</body></html>
